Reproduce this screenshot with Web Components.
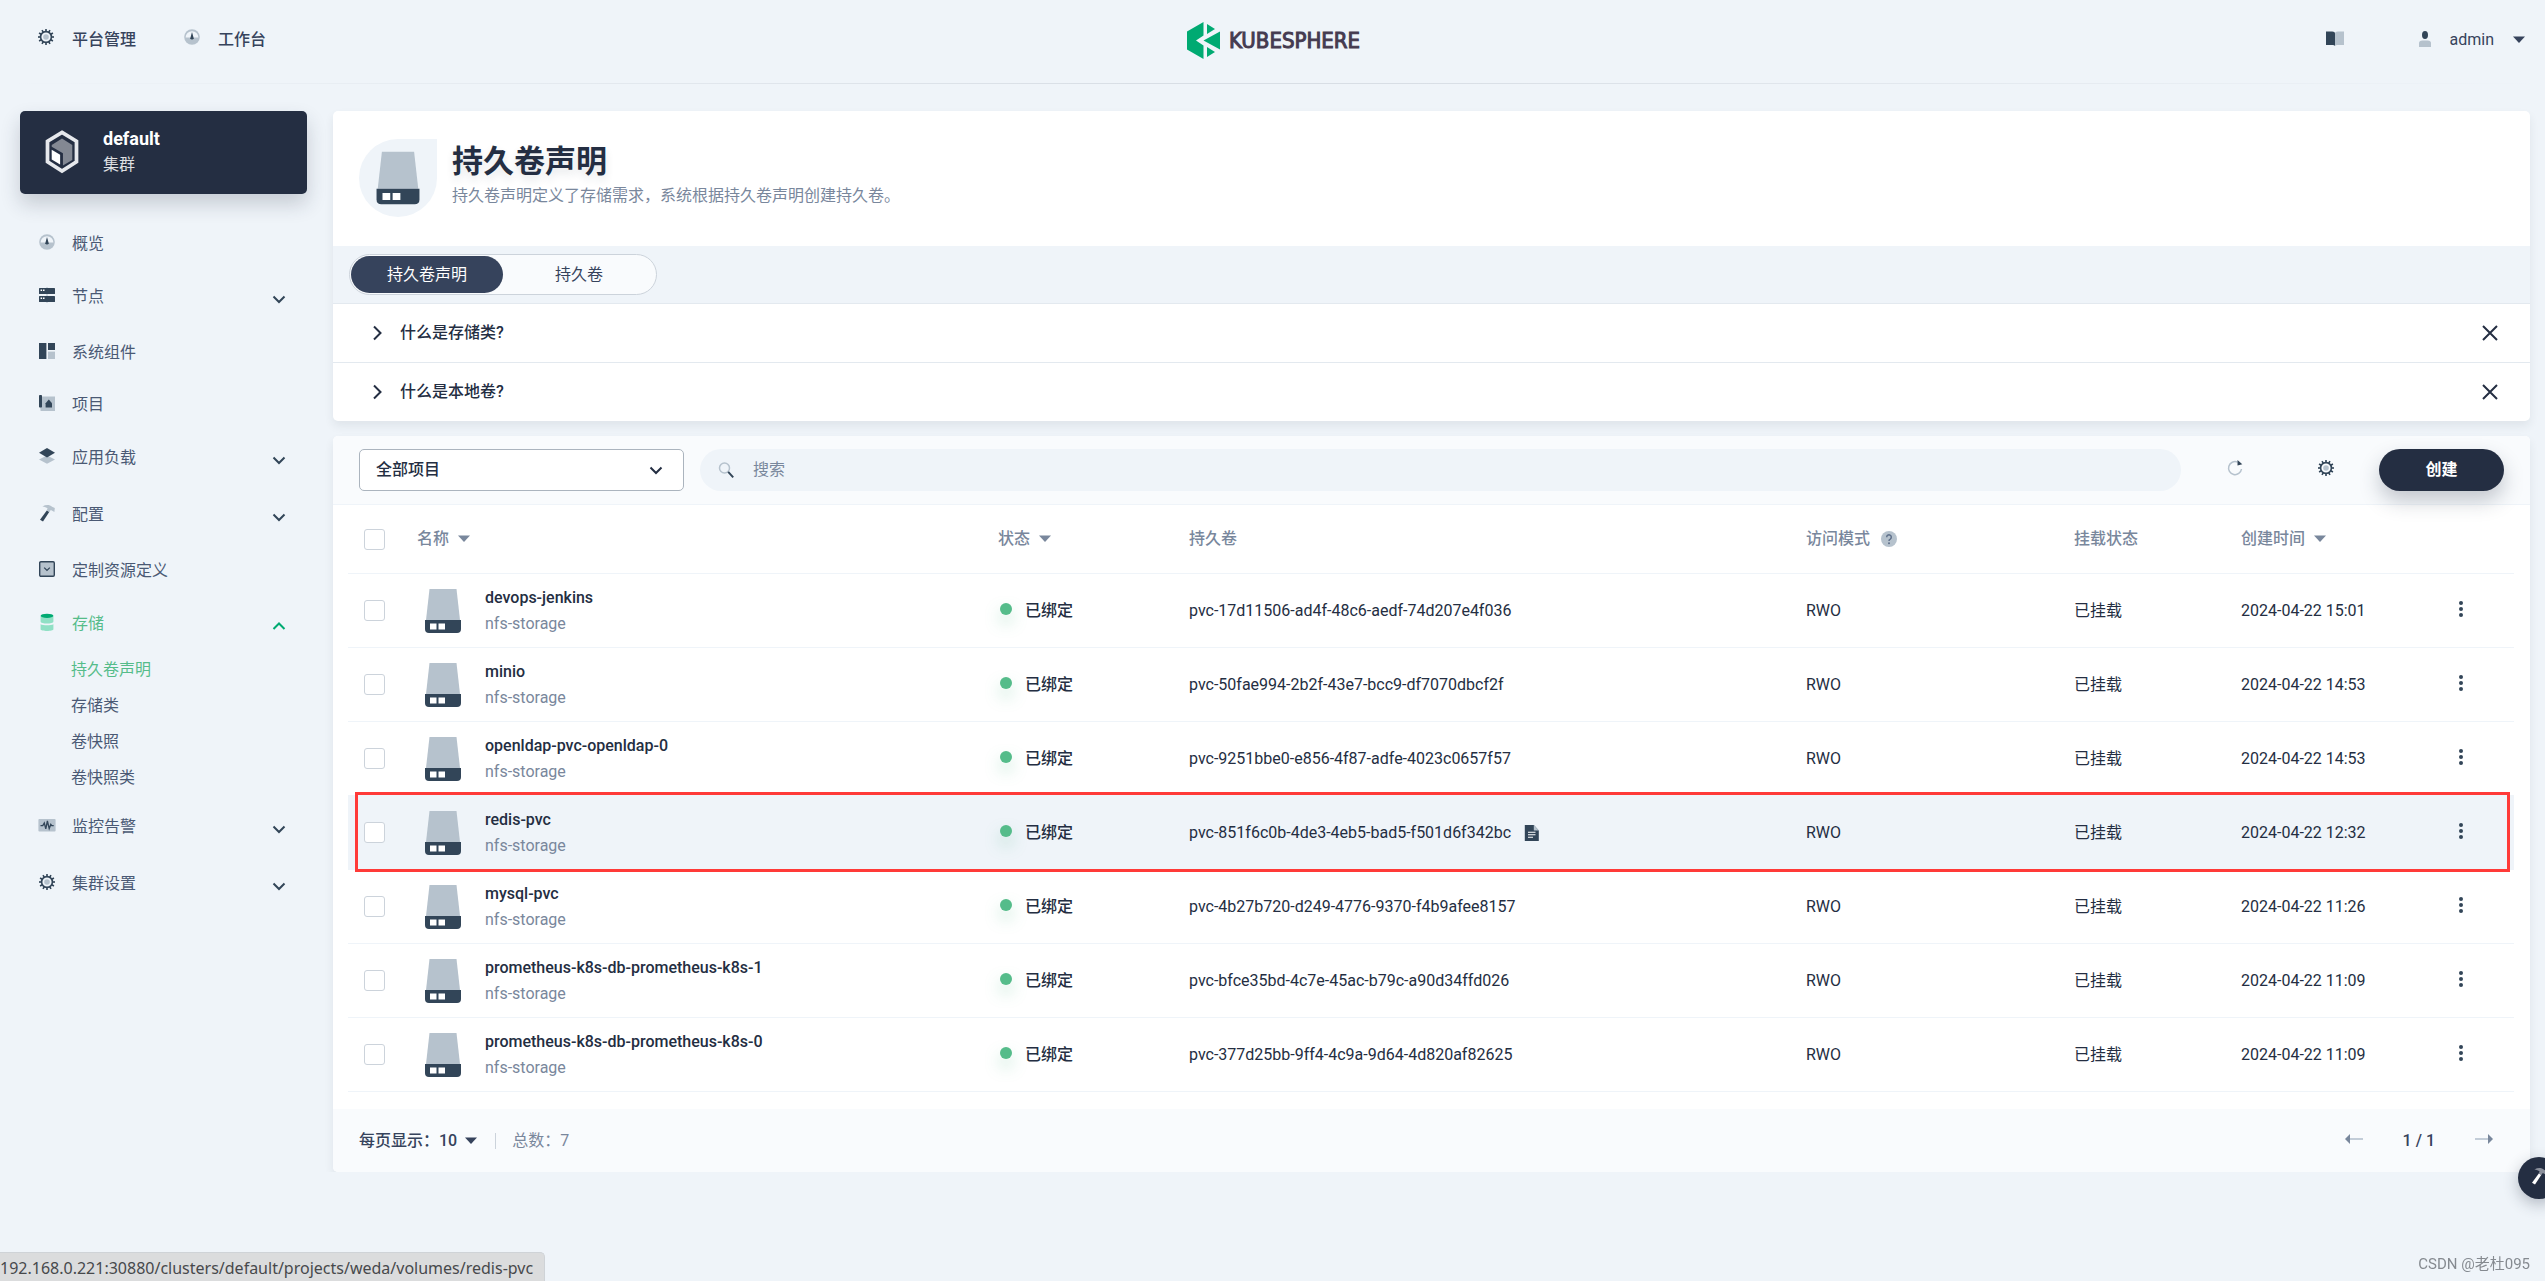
<!DOCTYPE html>
<html lang="zh-CN">
<head>
<meta charset="utf-8">
<title>持久卷声明 - KubeSphere</title>
<style>
:root{
  --dark:#242e42;--ink:#36435c;--muted:#79879c;--nav:#4a5974;--green:#55bc8a;
  --icon-dark:#324558;--icon-light:#b6c2cd;--line:#eff4f9;--soft:#f9fbfd;--bg:#eff4f9;
}
html,body{margin:0;min-height:100%}
body{background:var(--bg);color:var(--dark);font:400 16px/26px Roboto,"Noto Sans CJK SC",sans-serif}
</style>
</head>
<body>
<ks-app></ks-app>
<script>
const BASE = `*{box-sizing:border-box}
button,select,input{font:inherit;color:inherit;margin:0;border:0;background:none;padding:0}
button{cursor:pointer}a{color:inherit;text-decoration:none}ul{list-style:none;margin:0;padding:0}
:focus-visible{outline:2px solid #55bc8a}`;

function define(name, css, html, setup) {
  customElements.define(name, class extends HTMLElement {
    connectedCallback() {
      if (this.shadowRoot) return;
      const root = this.attachShadow({ mode: 'open' });
      const body = typeof html === 'function' ? html(this) : html;
      root.innerHTML = `<style>${BASE}${css}</style>${body}`;
      if (setup) setup(this, root);
    }
  });
}

const D = 'var(--icon-dark)', L = 'var(--icon-light)';
const teeth = Array.from({ length: 12 }, (_, i) =>
  `<rect x="7.2" y="0" width="1.6" height="3" fill="${D}" transform="rotate(${i * 30} 8 8)"/>`).join('');
const ICONS = {
  gear: `${teeth}<circle cx="8" cy="8" r="5.4" fill="none" stroke="${D}" stroke-width="1.6"/><circle cx="8" cy="8" r="2.8" fill="${L}"/>`,
  dash: `<circle cx="8" cy="8" r="7.8" fill="${L}"/><path d="M1.6 8.6a6.4 6.4 0 0 1 12.8 0z" fill="var(--bg)"/><path d="M8 3l1.7 6.2a1.8 1.8 0 0 1-3.4 0z" fill="${D}"/>`,
  node: `<rect y="1" width="16" height="6" rx=".6" fill="${D}"/><rect y="9" width="16" height="6" rx=".6" fill="${D}"/><path d="M8 0v1M8 7v2M8 15v1" stroke="${L}"/><path d="M1.6 2.4h1.5v1.6H1.6zM4 2.4h1.5v1.6H4zM1.6 10.4h1.5V12H1.6zM4 10.4h1.5V12H4z" fill="#fff"/>`,
  comp: `<path d="M0 0h7.4v16H0zM9 0h7v7H9z" fill="${D}"/><path d="M9 8.6h7V16H9z" fill="${L}"/>`,
  proj: `<path d="M0 1.4h16V16H1.6z" fill="${L}"/><rect width="3" height="12.6" rx=".8" fill="${D}"/><path d="M6.6 12.6V8.2L9.8 4.6 13 8.2v4.4z" fill="${D}"/>`,
  load: `<path d="M8 7.4l8 4-8 4.4-8-4.4z" fill="${L}"/><path d="M8 0l8 4.8-8 4.8-8-4.8z" fill="${D}"/>`,
  hammer: `<path d="M7.8 5.4L10.4 6.7 4 16.4 1 14.8z" fill="${D}"/><path d="M3.4 1.4C7-.6 11-.3 13 1.8l2.8 1.2-.4 4-2.6-1.6-1-.4-1.5 2-2.7-1.4 1-2C7.5 2.2 5.5 1.7 3.4 1.4z" fill="${L}"/>`,
  crd: `<rect x=".7" y=".7" width="14.6" height="14.6" rx="1.2" fill="${L}" stroke="${D}" stroke-width="1.4"/><path d="M5.2 6.6L8 9.4l2.8-2.8" fill="none" stroke="${D}" stroke-width="1.3"/>`,
  store: `<path d="M1.6 2v5.5C1.6 10.3 14.4 10.3 14.4 7.5V2z" fill="#90e0c5"/><path d="M1.6 10.2c2.3 1.5 10.5 1.5 12.8 0v5C14.4 17.5 1.6 17.5 1.6 15.2z" fill="#90e0c5"/><ellipse cx="8" cy="1.8" rx="6.4" ry="2.1" fill="#00aa72"/>`,
  monitor: `<rect x="-.6" y="2" width="17.2" height="12.6" rx="1" fill="${L}"/><path d="M1.5 8.6h2.3L5.3 6l1.5 5.8L8.4 4l1.8 7.6 1.6-4.2.9 1.2h2" fill="none" stroke="${D}" stroke-width="1.3"/>`,
  book: `<path d="M0 2.2h5.5Q8 2.2 8 4v11q-.5-.8-2-.8H0z" fill="${D}"/><path d="M8 4q0-1.8 2.5-1.8H16v12h-6q-1.5 0-2 .8z" fill="${L}"/>`,
  user: `<ellipse cx="8" cy="4" rx="3" ry="4" fill="${D}"/><path d="M2 16v-4q0-2.6 3.5-2.6h5Q14 9.400 14 12v4z" fill="${L}"/>`,
  caret: `<path d="M2 4.500h12L8 11z" fill="currentColor"/>`,
  down: `<path d="M2.5 5.500L8 11l5.500-5.500" fill="none" stroke="currentColor" stroke-width="2"/>`,
  up: `<path d="M2.500 11L8 5.500l5.500 5.500" fill="none" stroke="currentColor" stroke-width="2"/>`,
  right: `<path d="M5 1.500L11.500 8 5 14.500" fill="none" stroke="currentColor" stroke-width="2"/>`,
  close: `<path d="M1 1l14 14M15 1L1 15" fill="none" stroke="currentColor" stroke-width="2"/>`,
  search: `<circle cx="6.500" cy="6" r="5" fill="none" stroke="${L}" stroke-width="1.500"/><path d="M10.200 9.800l5 5.600" stroke="${D}" stroke-width="2"/>`,
  refresh: `<path d="M10.500 2.100A6.500 6.500 0 1 0 14.500 9" fill="none" stroke="${L}" stroke-width="1.500"/><path d="M10.500 5.500V0l4.800 4.200z" fill="${D}"/>`,
  help: `<circle cx="8" cy="8" r="8" fill="${L}"/><path d="M5.700 6.200a2.300 2.300 0 1 1 3.600 1.900Q8 8.800 8 10" fill="none" stroke="#5f708a" stroke-width="1.500"/><circle cx="8" cy="12.200" r="1" fill="#5f708a"/>`,
  more: `<circle cx="8" cy="2" r="2" fill="${D}"/><circle cx="8" cy="8" r="2" fill="${D}"/><circle cx="8" cy="14" r="2" fill="${D}"/>`,
  doc: `<path d="M.8 0h9l5 5.500V16H.8z" fill="${D}"/><path d="M9.800 0l5 5.500h-5z" fill="${L}"/><path d="M4 7.200h7.500M4 9.700h7.500M4 12.200h5" stroke="#fff" stroke-width="1.100"/>`,
  prev: `<path d="M4 8h13" stroke="#c3cdd8" stroke-width="2"/><path d="M-1 8l5-5v10z" fill="#79879c"/>`,
  next: `<path d="M-1 8h13" stroke="#c3cdd8" stroke-width="2"/><path d="M17 8l-5-5v10z" fill="#79879c"/>`,
  disk: `<path d="M6.500 4h27l3.500 31H3z" fill="${L}"/><path d="M2 35h36v9q0 4-4 4H6q-4 0-4-4z" fill="${D}"/><path d="M7 38.500h6.500v6H7zM15.500 38.500H22v6h-6.500z" fill="#fff"/>`,
  cluster: `<path d="M20 2.500L35.500 12v22L20 44 4.500 34V12z" fill="none" stroke="#e6e8ec" stroke-width="4"/><path d="M20 9l11 7v16l-10 6V25L9 18v-2z" fill="#838893"/><path d="M9 21l9 5.500V37l-9-5.500z" fill="#fff"/>`,
  logo: `<path d="M16.500 0v13.500L9 18.500l7.500 5V37L0 27.500V9.500z" fill="#00aa72"/><path d="M20 2l8 5-8 5zM20 25l8 5-8 5zM33 9.500v18L16.500 18.500z" fill="#00aa72"/>`
};
const BOX = { disk: '0 0 40 52', cluster: '2 0 36 46', logo: '0 0 33 37' };

define('ks-icon', `:host{display:inline-flex;flex:none;width:16px;height:16px}svg{display:block;width:100%;height:100%;overflow:visible}`,
  el => { const n = el.getAttribute('name');
    return `<svg viewBox="${BOX[n] || '0 0 16 16'}" aria-hidden="true">${ICONS[n]}</svg>`; });

define('ks-header', `
:host{display:block}
header{display:grid;grid-template-columns:1fr auto 1fr;align-items:center;height:84px;padding:0 18px 4px 20px;color:var(--ink);border-bottom:1px solid;border-image:linear-gradient(90deg,#eff4f9,#d8dee5 45%,#d8dee5 55%,#eff4f9) 1}
nav{display:flex;gap:48px;padding-left:18px}
nav a{display:flex;align-items:center;gap:18px;font-weight:500}
nav ks-icon{margin-bottom:6px}
.logo{display:flex;align-items:center;gap:9px;padding-top:2px}
.logo ks-icon{width:33px;height:37px}
.logo b{font:400 22px/37px "DejaVu Sans Condensed",sans-serif;color:#453b50;-webkit-text-stroke:1px #453b50}
.user{display:flex;justify-content:flex-end;align-items:center}
.user button{display:flex;align-items:center}
.book{margin-right:73px}
.who{gap:17px}
.book ks-icon{width:18px;height:18px;margin-bottom:4px}
.who ks-icon:first-child{margin-bottom:2px}
`, `
<header>
<nav><a href="#platform"><ks-icon name="gear"></ks-icon>平台管理</a><a href="#workbench"><ks-icon name="dash"></ks-icon>工作台</a></nav>
<a class="logo" href="#home"><ks-icon name="logo"></ks-icon><b>KUBESPHERE</b></a>
<div class="user"><button class="book" aria-label="文档"><ks-icon name="book"></ks-icon></button>
<button class="who"><ks-icon name="user"></ks-icon><span>admin</span><ks-icon name="caret"></ks-icon></button></div>
</header>`);

define('ks-nav-item', `
:host{display:block;color:var(--nav)}
:host([active]){color:var(--green)}
a{display:flex;align-items:center;gap:17px;height:52px;padding:3px 20px 0 19px}
:host([group]) a{height:57px;padding-top:0}
a>ks-icon:first-child{margin-bottom:4px}
span{flex:1}
.arrow{color:var(--icon-dark);margin-top:4px}
:host([active]) .arrow{color:#00aa72}
`, el => `<a href="#${el.getAttribute('icon')}"><ks-icon name="${el.getAttribute('icon')}"></ks-icon><span><slot></slot></span>${
  el.hasAttribute('group') ? `<ks-icon class="arrow" name="${el.hasAttribute('active') ? 'up' : 'down'}"></ks-icon>` : ''}</a><slot name="children"></slot>`);

define('ks-sidebar', `
:host{display:block}
.card{display:flex;align-items:center;gap:21px;width:100%;height:83px;padding:0 22px 2px;background:var(--dark);border-radius:5px;color:#fff;text-align:left;box-shadow:0 10px 20px rgba(36,46,66,.2);margin-bottom:22px}
.card ks-icon{width:40px;height:43px}
.card strong,.card small{display:block;line-height:26px}
.card strong{font-size:18px;font-weight:700}
.card small{font-size:16px;opacity:.85}
.sub{padding:0 0 2px 51px}
.sub a{display:block;line-height:36px;color:var(--nav)}
.sub a.on{color:var(--green)}
`, `
<button class="card"><ks-icon name="cluster"></ks-icon><span><strong>default</strong><small>集群</small></span></button>
<nav>
<ks-nav-item icon="dash">概览</ks-nav-item>
<ks-nav-item icon="node" group>节点</ks-nav-item>
<ks-nav-item icon="comp">系统组件</ks-nav-item>
<ks-nav-item icon="proj">项目</ks-nav-item>
<ks-nav-item icon="load" group>应用负载</ks-nav-item>
<ks-nav-item icon="hammer" group>配置</ks-nav-item>
<ks-nav-item icon="crd">定制资源定义</ks-nav-item>
<ks-nav-item icon="store" group active>存储<div slot="children" class="sub"><a class="on" href="#pvc">持久卷声明</a><a href="#sc">存储类</a><a href="#vs">卷快照</a><a href="#vsc">卷快照类</a></div></ks-nav-item>
<ks-nav-item icon="monitor" group>监控告警</ks-nav-item>
<ks-nav-item icon="gear" group>集群设置</ks-nav-item>
</nav>`);

define('ks-panel', `:host{display:block;background:#fff;border-radius:5px;box-shadow:0 5px 10px rgba(36,46,66,.08)}`, `<slot></slot>`);

define('ks-banner', `
:host{display:flex;align-items:flex-start;gap:15px;height:135px;padding:28px 26px 0}
.badge{display:flex;align-items:center;justify-content:center;width:78px;height:78px;background:var(--bg);border-radius:50% 0 50% 50%}
.badge ks-icon{width:48px;height:62px}
h1{margin:2px 0 0;font-size:31px;line-height:42px;font-weight:700;text-shadow:0 5px 8px rgba(36,46,66,.12)}
p{margin:0;line-height:26px;color:var(--muted)}
`, `<div class="badge"><ks-icon name="disk"></ks-icon></div><div><h1><slot name="title"></slot></h1><p><slot></slot></p></div>`);

define('ks-tabs', `
:host{display:block;background:var(--bg);padding:8px 16px;border-bottom:1px solid #e3e9ef}
div{display:inline-flex;vertical-align:top;height:41px;padding:1px;border:1px solid #ccd3db;border-radius:21px;background:var(--soft)}
button{width:152px;height:37px;border-radius:19px;color:var(--ink)}
button[aria-selected=true]{background:var(--ink);color:#fff}
`, `<div role="tablist"><button role="tab" aria-selected="true">持久卷声明</button><button role="tab" aria-selected="false">持久卷</button></div>`);

define('ks-tip', `
:host{display:flex;align-items:center;height:58px;padding:0 32px 0 36px;font-weight:500}
:host(:not(:last-child)){border-bottom:1px solid #e3e9ef;height:59px}
.t{flex:1;gap:15px;text-align:left}
button{display:flex;align-items:center;color:var(--dark)}
`, `<button class="t"><ks-icon name="right"></ks-icon><slot></slot></button><button aria-label="关闭"><ks-icon name="close"></ks-icon></button>`);

define('ks-toolbar', `
:host{display:flex;align-items:center;height:69px;padding:0 26px;gap:16px;background:var(--soft);border-bottom:1px solid var(--line);border-radius:5px 5px 0 0}
.select{display:grid;align-items:center;width:325px}
.select>*{grid-area:1/1}
select{appearance:none;height:42px;padding:0 16px;border:1px solid #abb4be;border-radius:5px;background:#fff;font-weight:500;width:100%}
.select ks-icon{justify-self:end;margin-right:20px;pointer-events:none}
.search{display:flex;align-items:center;gap:19px;flex:1;height:42px;padding:0 18px;border-radius:21px;background:var(--bg)}
input{flex:1;outline:0}
input::placeholder{color:var(--muted);opacity:1}
.tool{display:flex;justify-content:center;width:75px;padding-bottom:4px}
.create{width:125px;height:42px;border-radius:21px;background:var(--dark);color:#fff;font-weight:700;box-shadow:0 10px 20px rgba(36,46,66,.25)}
`, `
<label class="select" aria-label="项目"><select><option>全部项目</option></select><ks-icon name="down"></ks-icon></label>
<label class="search"><ks-icon name="search"></ks-icon><input type="text" placeholder="搜索" aria-label="搜索"></label>
<button class="tool" aria-label="刷新"><ks-icon name="refresh"></ks-icon></button>
<button class="tool" aria-label="设置"><ks-icon name="gear"></ks-icon></button>
<button class="create">创建</button>`);

const ROWS = [
  ['devops-jenkins', 'pvc-17d11506-ad4f-48c6-aedf-74d207e4f036', '2024-04-22 15:01'],
  ['minio', 'pvc-50fae994-2b2f-43e7-bcc9-df7070dbcf2f', '2024-04-22 14:53'],
  ['openldap-pvc-openldap-0', 'pvc-9251bbe0-e856-4f87-adfe-4023c0657f57', '2024-04-22 14:53'],
  ['redis-pvc', 'pvc-851f6c0b-4de3-4eb5-bad5-f501d6f342bc', '2024-04-22 12:32', true],
  ['mysql-pvc', 'pvc-4b27b720-d249-4776-9370-f4b9afee8157', '2024-04-22 11:26'],
  ['prometheus-k8s-db-prometheus-k8s-1', 'pvc-bfce35bd-4c7e-45ac-b79c-a90d34ffd026', '2024-04-22 11:09'],
  ['prometheus-k8s-db-prometheus-k8s-0', 'pvc-377d25bb-9ff4-4c9a-9d64-4d820af82625', '2024-04-22 11:09']
];

define('ks-table', `
:host{display:block;padding:0 16px 17px 15px}
table{width:100%;table-layout:fixed;border-collapse:separate;border-spacing:0}
th,td{padding:0 16px;text-align:left;border-bottom:1px solid var(--line);white-space:nowrap}
th{height:69px;font-weight:500;color:var(--muted)}
td{height:74px}
.c1{width:53px}.c3{width:191px}.c4{width:617px}.c5{width:268px}.c6{width:167px}.c7{width:212px}.c8{width:77px}
tr.hover{position:relative}
tr.hover td{background:var(--bg)}
.mark{position:absolute;inset:-4px 4px -2px 7px;border:3px solid #ff3a38;pointer-events:none}
input{appearance:none;display:block;width:21px;height:21px;border:1px solid #ccd3db;border-radius:3px;background:#fff}
.h,.cell,.st,.pv{display:flex;align-items:center}
.h{gap:7px}
.h.q{gap:11px}
.cell{gap:22px;padding-left:6px}
.cell ks-icon{width:40px;height:52px}
.cell a{display:block;font-weight:500}
.cell small{display:block;font-size:16px;color:var(--muted)}
.st{gap:13px;padding-left:2px;font-weight:500}
.st i{width:12px;height:12px;border-radius:50%;background:var(--green);box-shadow:0 8px 16px rgba(85,188,138,.36);margin-bottom:3px}
.pv{gap:13px}
td button{display:flex}
.act ks-icon{margin-bottom:4px}
`, `<table><colgroup><col class="c1"><col class="c2"><col class="c3"><col class="c4"><col class="c5"><col class="c6"><col class="c7"><col class="c8"></colgroup>
<thead><tr><th><input type="checkbox" aria-label="全选"></th>
<th><span class="h">名称<ks-icon name="caret"></ks-icon></span></th>
<th><span class="h">状态<ks-icon name="caret"></ks-icon></span></th>
<th>持久卷</th><th><span class="h q">访问模式<ks-icon name="help"></ks-icon></span></th>
<th>挂载状态</th><th><span class="h">创建时间<ks-icon name="caret"></ks-icon></span></th><th></th></tr></thead>
<tbody>${ROWS.map(([n, v, t, on]) => `<tr${on ? ' class="hover"' : ''}>
<td><input type="checkbox" aria-label="${n}"></td>
<td><div class="cell"><ks-icon name="disk"></ks-icon><div><a href="#${n}">${n}</a><small>nfs-storage</small></div></div></td>
<td><div class="st"><i></i>已绑定</div></td>
<td><div class="pv">${v}${on ? '<ks-icon name="doc"></ks-icon>' : ''}</div></td>
<td>RWO</td><td>已挂载</td><td>${t}</td>
<td class="act"><button aria-label="更多"><ks-icon name="more"></ks-icon></button>${on ? '<span class="mark"></span>' : ''}</td></tr>`).join('')}</tbody></table>`);

define('ks-pager', `
:host{display:flex;align-items:center;height:63px;padding:0 38px 0 26px;background:var(--soft);border-radius:0 0 5px 5px;color:var(--ink)}
.size{display:flex;align-items:center;font-weight:500;gap:6px}
.total{color:var(--muted);margin-left:16px;padding-left:16px;border-left:1px solid #ccd3db;line-height:16px}
.pages{display:flex;align-items:center;gap:41px;margin-left:auto;font-weight:500}
.pages button{display:flex;padding-bottom:4px}
`, `<button class="size"><span>每页显示：10</span><ks-icon name="caret"></ks-icon></button><span class="total">总数：7</span>
<div class="pages"><button aria-label="上一页"><ks-icon name="prev"></ks-icon></button><span>1 / 1</span><button aria-label="下一页"><ks-icon name="next"></ks-icon></button></div>`);

define('ks-toolbox', `
:host{position:fixed;right:-15px;bottom:82px}
button{--icon-dark:#fff;--icon-light:#8a8f9b;display:flex;align-items:center;justify-content:center;width:42px;height:42px;padding-bottom:4px;border-radius:21px;background:var(--dark);box-shadow:0 5px 15px rgba(36,46,66,.3)}
`, `<button aria-label="工具箱"><ks-icon name="hammer"></ks-icon></button>`);

define('ks-app', `
:host{display:block}
main{display:grid;grid-template-columns:287px minmax(0,1fr);gap:26px;padding:27px 15px 0 20px}
.content{display:grid;gap:15px;align-content:start}
.url{position:fixed;left:0;bottom:0;height:29px;padding:2px 11px 0 0;background:#dbdcdd;border:1px solid #cfd3d7;border-width:1px 1px 0 0;border-radius:0 5px 0 0;font:16px/26px "Noto Sans",sans-serif;color:#47494c}
.by{position:fixed;right:15px;bottom:4px;font-size:15px;color:#858a90}
`, `
<ks-header></ks-header>
<main>
<ks-sidebar></ks-sidebar>
<div class="content">
<ks-panel>
<ks-banner><span slot="title">持久卷声明</span>持久卷声明定义了存储需求，系统根据持久卷声明创建持久卷。</ks-banner>
<ks-tabs></ks-tabs>
<ks-tip>什么是存储类?</ks-tip><ks-tip>什么是本地卷?</ks-tip>
</ks-panel>
<ks-panel><ks-toolbar></ks-toolbar><ks-table></ks-table><ks-pager></ks-pager></ks-panel>
</div>
</main>
<ks-toolbox></ks-toolbox>
<div class="url">192.168.0.221:30880/clusters/default/projects/weda/volumes/redis-pvc</div>
<div class="by">CSDN @老杜095</div>`);
</script>
</body>
</html>
